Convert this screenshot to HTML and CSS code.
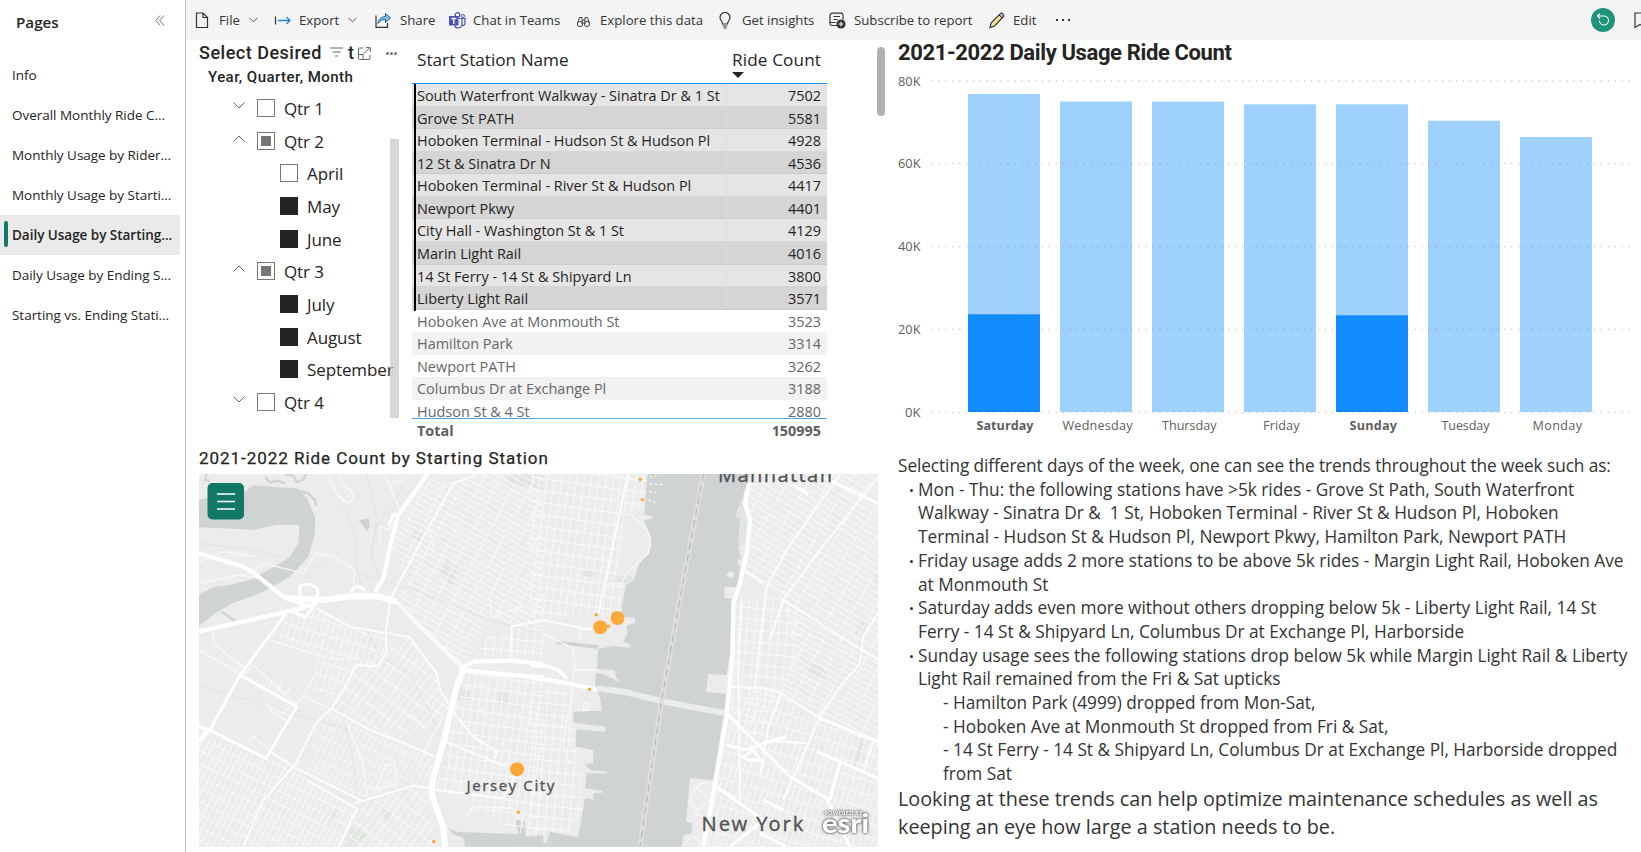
FILE: index.html
```html
<!DOCTYPE html>
<html lang="en">
<head>
<meta charset="utf-8">
<title>Daily Usage by Starting Station</title>
<link rel="stylesheet" href="styles.css">
</head>
<body>
<div class="app">
  <nav class="sidebar">
    <div class="side-head"><span>Pages</span>
      <svg class="collapse" width="10" height="11" viewBox="0 0 10 11"><path d="M5 .5.8 5.500 5 10.500M9 .5 4.800 5.500 9 10.500"/></svg>
    </div>
    <a class="page">Info</a>
    <a class="page">Overall Monthly Ride C...</a>
    <a class="page">Monthly Usage by Rider...</a>
    <a class="page">Monthly Usage by Starti...</a>
    <a class="page active">Daily Usage by Starting...</a>
    <a class="page">Daily Usage by Ending S...</a>
    <a class="page">Starting vs. Ending Stati...</a>
  </nav>
  <div class="main">
    <header class="toolbar">
      <div class="tool"><svg width="14" height="17" viewBox="0 0 14 17"><path class="ink" d="M1.500 1H8l4.500 4.500v10h-11zM8 1v4.500h4.500"/></svg><span>File</span><svg class="chev" width="9" height="6" viewBox="0 0 9 6"><path d="M.5.800l4 4 4-4"/></svg></div>
      <div class="tool"><svg width="18" height="17" viewBox="0 0 18 17"><path class="ink" d="M1.500 4.500v8"/><path class="blue" d="M4 8.500h12M12.500 5l3.500 3.500-3.500 3.500"/></svg><span>Export</span><svg class="chev" width="9" height="6" viewBox="0 0 9 6"><path d="M.5.800l4 4 4-4"/></svg></div>
      <div class="tool"><svg width="17" height="17" viewBox="0 0 17 17"><path class="ink" d="M1 3.500v11.800h11.500V11"/><path class="arrow" d="M3 11.500C3.500 7 6 5 10.500 4.500V1.500L15.500 6l-5 4.500v-3C7 7.500 5 8.500 3 11.500z"/></svg><span>Share</span></div>
      <div class="tool"><svg width="18" height="17" viewBox="0 0 18 17"><circle cx="9.500" cy="3" r="2.300" fill="#fff" stroke="#4b53bc" stroke-width="1.300"/><circle cx="15" cy="4" r="1.500" fill="#fff" stroke="#4b53bc"/><path d="M11 6.500h3v6c0 2-1.500 3.200-3.500 3.500-2 0-3.500-1-4-2.500M14 6.500h3v4.500c0 1.500-1 2.500-2.500 2.500" fill="none" stroke="#4b53bc" stroke-width="1.200"/><rect x="1" y="4" width="9.500" height="9.500" fill="#4b53bc"/><path d="M3.300 6.500h5M5.800 6.500V12" stroke="#fff" stroke-width="1.400"/></svg><span>Chat in Teams</span></div>
      <div class="tool"><svg width="15" height="17" viewBox="0 0 15 17"><g class="thin"><circle cx="4" cy="12" r="2.600"/><circle cx="11" cy="12" r="2.600"/><path d="M1.500 11 3.500 5.500h2.500V12M13.500 11l-2-5.500H9V12M6 8h3M6.500 11h2"/></g></svg><span>Explore this data</span></div>
      <div class="tool"><svg width="16" height="17" viewBox="0 0 16 17"><path class="ink" d="M5.500 12C5.500 9 3 8.500 3 5.500a5 5 0 0 1 10 0C13 8.500 10.500 9 10.500 12zM5.700 14h4.600M6.500 16h3"/></svg><span>Get insights</span></div>
      <div class="tool"><svg width="18" height="17" viewBox="0 0 18 17"><path class="ink" d="M8 13.500H3a2 2 0 0 1-2-2V3.500a2.300 2.300 0 0 1 2.300-2.300H12A2 2 0 0 1 14 3.500v4M4.500 4.500h6.500M4.500 7.500h4M1.500 10.500h5"/><circle cx="12" cy="12" r="4.600" fill="#333"/><path d="M9.500 12h5M12 9.500v5" stroke="#fff"/></svg><span>Subscribe to report</span></div>
      <div class="tool"><svg width="18" height="17" viewBox="0 0 18 17"><path d="M2 15.500 3 11 12.500 1.500l3 3L6.500 14z" fill="#ffe29a" stroke="#333" stroke-width="1.200"/><path d="M11 3 13 1c1-.7 3.500 1.500 2.700 3L14 6z" fill="#b79ad0" stroke="#333"/></svg><span>Edit</span></div>
      <div class="more"><i></i><i></i><i></i></div>
      <div class="right-tools">
        <svg width="24" height="24" viewBox="0 0 24 24"><circle cx="12" cy="12" r="12" fill="#20937c"/><path d="M6.500 8h7a4.500 4.500 0 1 1-5 4.500M9 5.500 6.500 8 9 10.500" fill="none" stroke="#fff" stroke-width="1.100"/></svg>
        <svg class="bookmark" width="12" height="17" viewBox="0 0 12 17"><path class="ink" d="M1 1h10v14.500L6 12.500 1 15.500z"/></svg>
      </div>
    </header>

    <div class="report">
      <div class="left">
        <div class="top">
          <section class="slicer">
            <div class="slicer-title"><span class="st-text">Select Desired</span>
              <svg width="13" height="10" viewBox="0 0 13 10"><path d="M0 1h13M2.500 5h8M5 9h3"/></svg><span class="st-t">t</span>
              <svg class="focus" width="13" height="13" viewBox="0 0 13 13"><path d="M5 1H1.500a1 1 0 0 0-1 1v9.500a1 1 0 0 0 1 1H11a1 1 0 0 0 1-1V8M.500 7.500H5v5M5.500 7 12 .800M8 .6h4.300V5"/></svg>
              <span class="dots"><i></i><i></i><i></i></span>
            </div>
            <div class="slicer-sub">Year, Quarter, Month</div>
            <div class="tree-wrap">
              <div class="tree">
                <div class="node"><svg class="tw" viewBox="0 0 12 7"><path d="M.5.500l5.500 5.500L11.500.500"/></svg><b class="box"></b>Qtr 1</div>
                <div class="node"><svg class="tw" viewBox="0 0 12 7"><path d="M.5 6.500 6 1l5.500 5.500"/></svg><b class="box part"></b>Qtr 2</div>
                <div class="node month"><b class="box"></b>April</div>
                <div class="node month"><b class="box full"></b>May</div>
                <div class="node month"><b class="box full"></b>June</div>
                <div class="node"><svg class="tw" viewBox="0 0 12 7"><path d="M.5 6.500 6 1l5.500 5.500"/></svg><b class="box part"></b>Qtr 3</div>
                <div class="node month"><b class="box full"></b>July</div>
                <div class="node month"><b class="box full"></b>August</div>
                <div class="node month"><b class="box full"></b>September</div>
                <div class="node"><svg class="tw" viewBox="0 0 12 7"><path d="M.5.500l5.500 5.500L11.500.500"/></svg><b class="box"></b>Qtr 4</div>
              </div>
              <div class="tree-scroll"></div>
            </div>
          </section>

          <section class="table">
            <div class="thead"><span>Start Station Name</span><span class="rc">Ride Count<i class="sort"></i></span></div>
            <div class="tbody">
              <div class="row sel"><span>South Waterfront Walkway - Sinatra Dr &amp; 1 St</span><span>7502</span></div>
              <div class="row sel alt"><span>Grove St PATH</span><span>5581</span></div>
              <div class="row sel"><span>Hoboken Terminal - Hudson St &amp; Hudson Pl</span><span>4928</span></div>
              <div class="row sel alt"><span>12 St &amp; Sinatra Dr N</span><span>4536</span></div>
              <div class="row sel"><span>Hoboken Terminal - River St &amp; Hudson Pl</span><span>4417</span></div>
              <div class="row sel alt"><span>Newport Pkwy</span><span>4401</span></div>
              <div class="row sel"><span>City Hall - Washington St &amp; 1 St</span><span>4129</span></div>
              <div class="row sel alt"><span>Marin Light Rail</span><span>4016</span></div>
              <div class="row sel"><span>14 St Ferry - 14 St &amp; Shipyard Ln</span><span>3800</span></div>
              <div class="row sel alt"><span>Liberty Light Rail</span><span>3571</span></div>
              <div class="row"><span>Hoboken Ave at Monmouth St</span><span>3523</span></div>
              <div class="row alt"><span>Hamilton Park</span><span>3314</span></div>
              <div class="row"><span>Newport PATH</span><span>3262</span></div>
              <div class="row alt"><span>Columbus Dr at Exchange Pl</span><span>3188</span></div>
              <div class="row"><span>Hudson St &amp; 4 St</span><span>2880</span></div>
            </div>
            <div class="total"><span>Total</span><span>150995</span></div>
          </section>
          <div class="vscroll"></div>
        </div>

        <h2 class="map-title">2021-2022 Ride Count by Starting Station</h2>
        <svg class="map" width="679" height="373" viewBox="199 474 679 373">
          <defs>
            <pattern id="g1" width="17" height="34" patternUnits="userSpaceOnUse" patternTransform="rotate(27)"><path d="M0 1H17M1 0V34" class="st"/></pattern>
            <pattern id="g2" width="46" height="17" patternUnits="userSpaceOnUse" patternTransform="rotate(28)"><path d="M0 1H46M1 0V17" class="st"/></pattern>
            <pattern id="g3" width="22" height="36" patternUnits="userSpaceOnUse" patternTransform="rotate(8)"><path d="M0 1H22M1 0V36" class="st"/></pattern>
            <pattern id="g4" width="52" height="18" patternUnits="userSpaceOnUse" patternTransform="rotate(31)"><path d="M0 1H52M1 0V18" class="st"/></pattern>
            <pattern id="g5" width="20" height="44" patternUnits="userSpaceOnUse" patternTransform="rotate(37)"><path d="M0 1H20M1 0V44" class="st"/></pattern>
            <pattern id="g6" width="24" height="34" patternUnits="userSpaceOnUse" patternTransform="rotate(5)"><path d="M0 1H24M1 0V34" class="st"/></pattern>
            <pattern id="g7" width="18" height="40" patternUnits="userSpaceOnUse" patternTransform="rotate(17)"><path d="M0 1H18M1 0V40" class="st"/></pattern>
          </defs>
          <rect x="199" y="474" width="679" height="373" fill="#ececec"/>
          <!-- western half -->
          <g transform="translate(190 440) scale(.33333)">
            <path class="water" d="M27 180 110 160 165 155 190 135 240 140 320 145 350 172 375 230 375 280 355 350 300 410 240 445 190 468 130 488 75 520 27 558V462L75 440 120 435 180 420 250 382 300 350 325 310 328 255 260 254 190 270 100 265 27 262z"/>
            <path class="creek" d="M50 102 45 120 60 122M225 112l15 15 25-5 20 8M285 102l25 5 10 20 20-8 8-17M320 150l35 10 20 20 4 18M95 515l40 28"/>
            <path class="water" d="M507 240 537 236 540 262 530 272zM775 1165 800 1175 830 1177 985 1182 978 1145 990 1136 1006 1150 1006 1190 1060 1185V1220H826L820 1195 790 1182z"/>
            <path class="park" d="M950 110 985 102H1060V155L1010 140 960 130zM670 272 707 285 694 307 662 292zM765 362 806 380 786 434 752 405zM805 746 840 750 835 780 800 778zM928 758l32 3-2 35-33-3zM400 1127l50-20-15 36zM485 1160l35 8 10 20-40 32h-30zM586 1103l25 20-18 22-20-24zM785 820l18 15-15 15z"/>
            <path fill="url(#g2)" d="M715 115 790 130 745 235 690 350 640 390 600 330 630 215z"/>
            <path fill="url(#g2)" d="M800 125 870 102H1060V560H980L905 530 850 640 805 672 640 490 630 450 700 300z"/>
            <path fill="url(#g7)" d="M290 530 380 508 510 568 590 578 588 650 560 680 500 675 440 790 370 740 380 640 270 600z"/>
            <path fill="url(#g5)" d="M500 685 660 590 740 720 780 800 735 850 620 900 430 800z"/>
            <path fill="url(#g1)" d="M62 880 228 955 320 975 200 1110 165 1220H27V910z"/>
            <path fill="url(#g1)" d="M325 980 350 1020 510 1110 450 1220H170L210 1100z"/>
            <path fill="url(#g1)" d="M380 845 425 810 730 950 720 1040 660 1030 500 1080 350 1000z" opacity=".75"/>
            <path fill="url(#g5)" d="M520 1090 680 1040 720 1060 740 1220H460z"/>
            <path fill="url(#g3)" d="M835 700 1060 715V1180H985L850 1100 740 1045 790 820z"/>
            <path fill="url(#g6)" d="M890 590 965 570 1060 545V660H850z"/>
            <path class="rail" d="M530 102 560 230 545 350 580 440M460 200 495 280 500 390 520 450M640 140 560 260 540 360M27 310 160 325 300 355 400 385M500 400 690 455 900 540 1050 580M530 570 570 650 660 700 750 880M27 735 240 800 480 870M715 102 650 165 590 230M465 850 490 960 500 1080"/>
            <path class="minor" d="M27 365 100 335 200 350M180 400 220 370 340 400 375 340 430 350 495 390 490 430M27 430 150 405 230 420M70 575v35l100 80M27 630 150 700M240 600 380 645 460 660M570 310v-50l30 10 30-55M585 102l45 110M720 270 735 350M900 480 905 530 1000 500M415 102 440 160 470 190 492 180 485 155 455 130 450 102M610 120l12 12 20-20"/>
            <path class="minor" d="M160 706l30-30 130 120M235 805 300 850M220 790l60 30 60-50 90 40M300 740l-15 30M250 715l-15 30M275 728l-15 30M170 910l20-20 60 50M380 700l-50 80M470 850l50 120 10 100M580 980l35-10 5 60-60 20zM700 780l60 50-60 110M660 820l50 50M830 1130l20-30 120 5 30 50"/>
            <path class="mid" d="M378 505 480 560 660 592 740 700 750 750 800 830 850 890 920 935 915 955M600 485 588 575 590 635 563 680 500 675 465 740 425 805 380 845 315 975 220 1080 185 1160 160 1220M425 805 540 870 620 900 735 950M350 1020 500 1105 445 1220M240 935 320 985 520 1085M495 1090 670 1037 725 1045M725 1048 940 1075 985 985M765 905 950 980M600 480 690 310 790 130 860 105M965 660V560L1060 540"/>
            <path class="road" d="M288 520 150 705 60 870 27 905M150 705 320 800 228 955 62 872 27 862"/>
            <path class="hwy" d="M27 575 160 545 320 508 380 490M27 340 160 380 190 398 280 470 360 500M712 102 625 225 600 320 580 415 555 455"/>
            <path class="hwy2" d="M290 475 400 480 470 470 560 468 620 485"/>
            <path class="hwy" d="M620 485 690 560 815 680" opacity=".7"/>
            <path class="hwy2" d="M765 1220 760 1160 725 1065 728 1020 765 890 800 740 820 690"/>
            <path class="hwy" d="M810 688 850 665 960 662 1060 672M820 690 960 705 1060 712"/>
            <path class="road" d="M330 470V440a28 22 0 1 1 45 35M485 460a18 15 0 1 1 38-8M300 510 345 532 370 500M595 255 610 225 628 225"/>
            <path class="road" d="M27 862 70 872M35 895 45 870"/>
          </g>
          <!-- eastern half -->
          <g transform="translate(530 440) scale(.33333)">
            <path fill="url(#g3)" d="M0 102H352L345 210 300 215 280 300 260 420 288 435 270 525 205 535 120 525 20 545 0 545z"/>
            <path fill="url(#g6)" d="M0 690 90 720 125 740 125 850 150 960 160 1120 110 1190 0 1190z"/>
            <path class="water" d="M352 102 348 150 343 225 368 228 366 235 343 242 362 290 364 320 350 345 325 375 312 420 288 435 275 500 278 530 315 533 315 550 290 556 292 580 280 605 302 615 300 623 250 618 205 627 80 612V602L205 616 201 688 255 690 257 712 273 728 215 700 197 700 195 735 210 770 215 812 130 815 130 848 227 860 225 875 140 868 136 920 190 930V970L165 972 180 990 232 995 230 1001 170 1000 165 1045 218 1053 216 1058 190 1060 190 1080 165 1075 155 1130 145 1192 60 1175 50 1210 -60 1185V1220H455L460 1185 485 1180 487 1150 468 1145 480 1015 550 1020 580 830 588 762 528 755 535 702 590 705 600 640 605 475H583V441H620L635 360 625 325 630 235 615 230 635 200 640 165 660 102z"/>
            <path class="park" d="M640 165 660 235 650 300 627 325 630 235 615 230zM828 690 845 668 893 697 880 722zM975 580l20-35 18 5-10 30-20 10zM1044 370V430L1028 415zM255 408h55l-5 18-50 8zM160 390l30 2v18l-33-3zM970 975 990 900 1000 915 985 980z"/>
            <path fill="#ececec" d="M600 392l14 8-8 16-18-8zM625 358h12v20h-14z"/>
            <path fill="url(#g4)" d="M670 102H1044V640L760 480 700 440 640 400 655 340 662 230 650 170z"/>
            <path fill="url(#g6)" d="M612 470 760 475 830 540 760 760 690 900 590 820 605 640z"/>
            <path fill="url(#g2)" d="M760 480 1044 640V900L870 830 755 760 790 640z"/>
            <path fill="url(#g7)" d="M600 830 680 740 755 760 870 830 1044 905V1220H530L560 1040z"/>
            <path fill="none" class="minor" d="M490 1060a40 40 0 0 1 50-30M500 1110 480 1080 500 1040 540 1080 490 1120 540 1140M470 1200l20-10 30 30"/>
            <path class="minor" d="M40 580 130 625 135 690 200 690M130 690 125 780 105 860 100 920 120 970M150 600v-30l50-10M0 850 110 860M300 220 350 270 362 300 355 340 290 400 275 430 240 430M160 790h15v20h-15z"/>
            <path class="minor" d="M360 112l20-5M360 132l40 2M358 155l20 3M355 180l25 8" stroke-dasharray="8 6"/>
            <path class="mid" d="M294 102 240 360 205 520M0 548 40 540 185 570M930 102 770 330 710 440 690 600 675 740M1044 110 870 330 760 480 720 600M760 480 900 570 1044 660M645 395 700 430M700 900 830 910M1044 520 1000 590 990 670 930 740 870 830 840 900 760 1080M605 740 700 745 755 760 870 835M755 760 715 860 690 1010M635 480 625 700 630 1080M930 970 900 1060M1030 905 1000 1000"/>
            <path class="road" d="M860 102 1044 190M790 135 835 160M870 835 1044 905M860 935 1044 1015M590 915 650 930 700 910 770 890M560 1040 700 1140 600 1220M700 1080 760 1110M930 970 900 1080"/>
            <path class="tunnel" d="M200 745 280 755 400 785 590 820"/>
            <path d="M0 712 100 728 200 748" class="hwy"/><path class="hwy" d="M0 675 50 678 85 690 110 715" opacity=".9"/>
            <path class="road" d="M590 820 700 930 780 1010 890 1075 960 1220M690 1180 770 1220M640 950l30-20 20 30-35 0z"/>
            <path class="hwy" d="M658 130 645 190 660 240 650 340 630 430 610 490 608 640 590 830 550 1060 520 1220"/>
            <path d="M520 102 455 450 395 780 330 1220" stroke="#dddddb" stroke-width="16" fill="none"/>
            <path d="M520 102 455 450 395 780 330 1220" stroke="#b5b1ae" stroke-width="3" stroke-dasharray="22 13" fill="none"/>
          </g>
          <g class="labels">
            <text x="718" y="482" font-size="20" textLength="114">Manhattan</text>
            <text x="466.500" y="791" font-size="15" textLength="88">Jersey City</text>
            <text x="701.500" y="830.500" font-size="20" textLength="102">New York</text>
          </g>
          <g fill="#fea83a">
            <circle cx="617.500" cy="618" r="7"/><circle cx="600.300" cy="627.300" r="7"/><circle cx="517" cy="769.300" r="7"/>
            <circle cx="640.300" cy="479.500" r="1.800"/><circle cx="642.300" cy="499.800" r="1.800"/><circle cx="596.200" cy="614.800" r="1.800"/><circle cx="608.500" cy="626.200" r="1.800"/><circle cx="589.500" cy="689.300" r="1.800"/><circle cx="518.200" cy="812.200" r="1.800"/><circle cx="433.700" cy="841.500" r="1.800"/>
          </g>
          <g class="esri"><text x="824.500" y="815" font-size="5.500" font-weight="700" textLength="38">POWERED BY</text><text x="822" y="833" font-size="26" font-weight="900" textLength="47" lengthAdjust="spacingAndGlyphs">esri</text></g>
          <rect x="207.500" y="483" width="36.500" height="36.500" rx="5" fill="#117865"/>
          <path d="M217 494h18M217 501.500h18M217 509h18" stroke="#fff" stroke-width="1.300"/>
        </svg>
      </div>

      <div class="rightcol">
        <h1 class="chart-title">2021-2022 Daily Usage Ride Count</h1>
        <svg class="chart" width="743" height="370" viewBox="898 70 743 370">
          <g class="grid"><path d="M931.500 81H1631M931.500 163.500H1631M931.500 246.500H1631M931.500 329.500H1631M931.500 412.500H1631"/></g>
          <g class="bars">
            <rect x="968" y="94" width="72" height="318"/><rect x="1060" y="101.500" width="72" height="310.500"/><rect x="1152" y="101.700" width="72" height="310.300"/><rect x="1244" y="104.300" width="72" height="307.700"/><rect x="1336" y="104.300" width="72" height="307.700"/><rect x="1428" y="120.700" width="72" height="291.300"/><rect x="1520" y="137" width="72" height="275"/>
          </g>
          <g fill="#118dff"><rect x="968" y="314.300" width="72" height="97.700"/><rect x="1336" y="315.300" width="72" height="96.700"/></g>
          <g class="axis">
            <text x="898" y="85.500" textLength="22.500" lengthAdjust="spacingAndGlyphs">80K</text><text x="898" y="168" textLength="22.500" lengthAdjust="spacingAndGlyphs">60K</text><text x="898" y="251" textLength="22.500" lengthAdjust="spacingAndGlyphs">40K</text><text x="898" y="334" textLength="22.500" lengthAdjust="spacingAndGlyphs">20K</text><text x="905" y="416.500" textLength="15.500" lengthAdjust="spacingAndGlyphs">0K</text>
            <text class="bold" x="976.500" y="430" textLength="57">Saturday</text><text x="1062.500" y="430" textLength="70">Wednesday</text><text x="1162" y="430" textLength="54.500">Thursday</text><text x="1263" y="430" textLength="36.500">Friday</text><text class="bold" x="1349.500" y="430" textLength="47.500">Sunday</text><text x="1441.500" y="430" textLength="48">Tuesday</text><text x="1532.500" y="430" textLength="49.500">Monday</text>
          </g>
        </svg>
        <article class="notes">
          <p class="lead">Selecting different days of the week, one can see the trends throughout the week such as:</p>
          <ul>
            <li>Mon - Thu: the following stations have &gt;5k rides - Grove St Path, South Waterfront<br>Walkway - Sinatra Dr &amp; &nbsp;1 St, Hoboken Terminal - River St &amp; Hudson Pl, Hoboken<br>Terminal - Hudson St &amp; Hudson Pl, Newport Pkwy, Hamilton Park, Newport PATH</li>
            <li>Friday usage adds 2 more stations to be above 5k rides - Margin Light Rail, Hoboken Ave<br>at Monmouth St</li>
            <li>Saturday adds even more without others dropping below 5k - Liberty Light Rail, 14 St<br>Ferry - 14 St &amp; Shipyard Ln, Columbus Dr at Exchange Pl, Harborside</li>
            <li>Sunday usage sees the following stations drop below 5k while Margin Light Rail &amp; Liberty<br>Light Rail remained from the Fri &amp; Sat upticks</li>
          </ul>
          <p class="sub">- Hamilton Park (4999) dropped from Mon-Sat,<br>- Hoboken Ave at Monmouth St dropped from Fri &amp; Sat,<br>- 14 St Ferry - 14 St &amp; Shipyard Ln, Columbus Dr at Exchange Pl, Harborside dropped<br>from Sat</p>
          <p class="closing">Looking at these trends can help optimize maintenance schedules as well as<br>keeping an eye how large a station needs to be.</p>
        </article>
      </div>
    </div>
  </div>
</div>
</body>
</html>
```
FILE: styles.css
```css
* { box-sizing: border-box; }
body { margin: 0; font-family: "Open Sans", "Noto Sans", sans-serif; color: #252423; background: #fff; overflow: hidden; }
.app { display: flex; width: 1641px; height: 852px; overflow: hidden; white-space: nowrap; }
svg { display: block; flex: none; }

.sidebar { width: 186px; border-right: 1px solid #c4c4c4; flex: none; }
.side-head { height: 54px; padding: 0 20px 10px 16px; display: flex; align-items: center; justify-content: space-between; font-size: 15.200px; font-weight: 600; }
.collapse { fill: none; stroke: #777; margin-bottom: 4px; }
.page { display: flex; align-items: center; width: 180px; height: 40px; padding: 0 0 1px 12px; font-size: 13.500px; letter-spacing: -.03px; position: relative; }
.page.active { background: #eaeaea; font-weight: 600; }
.page.active::before { content: ""; position: absolute; left: 4px; top: 6px; width: 4px; height: 26px; border-radius: 2px; background: #117865; }
.side-head + .page { margin-top: 1px; }

.main { flex: 1; min-width: 0; }
.toolbar { height: 40px; background: #f4f4f4; display: grid; grid-template-columns: 79px 101px 73px 128px 141px 112px 159px 68px 1fr auto; padding-left: 9px; align-items: center; font-size: 13.200px; color: #333; }
.tool { display: grid; grid-template-columns: 24px auto 1fr; align-items: center; }
.tool:nth-child(n+2) { grid-template-columns: 25px auto 1fr; }
.tool:nth-child(5) { grid-template-columns: 24px auto 1fr; }
.tool:nth-child(1) .chev { margin-left: 9px; }
.ink { fill: none; stroke: #333; stroke-width: 1.200; }
.blue { fill: none; stroke: #1a86d0; stroke-width: 1.300; }
.arrow { fill: #83beec; stroke: #1f5f97; }
.thin { fill: none; stroke: #444; stroke-width: 1; }
.chev { margin-left: 9px; fill: none; stroke: #555; }
.more { display: flex; gap: 4px; }
.more i { width: 2px; height: 2px; background: #333; }
.right-tools { display: flex; align-items: center; gap: 19px; width: 50px; overflow: hidden; }

.report { display: flex; height: 812px; }
.left { width: 712px; padding-left: 13px; flex: none; }
.top { display: flex; height: 408px; }

.slicer { width: 213px; flex: none; }
.slicer-title { display: flex; align-items: center; height: 28px; padding-bottom: 4px; font-family: Roboto, sans-serif; font-size: 18px; font-weight: 500; }
.slicer-title svg { fill: none; stroke: #666; }
.st-text { width: 131px; letter-spacing: .5px; }
.slicer-title .st-t { margin: 0 4px 0 5px; }
.slicer-title .focus { margin-top: 3px; }
.dots { display: flex; gap: 1px; margin: 2px 0 0 15px; }
.dots i { width: 3px; height: 3px; border-radius: 50%; background: #777; }
.slicer-sub { padding-left: 9px; height: 25px; line-height: 18px; font-family: Roboto, sans-serif; font-size: 15px; font-weight: 500; letter-spacing: .45px; }
.tree-wrap { display: flex; position: relative; }
.tree { width: 191px; margin-top: -1px; }
.node { display: flex; align-items: center; height: 32.700px; padding-left: 34px; font-size: 17px; letter-spacing: -.1px; }
.tw { width: 12px; height: 7px; margin: -6px 13px 0 0; fill: none; stroke: #666; }
.box { width: 18px; height: 18px; border: 1px solid #777; margin: -1px 9px 0 -1px; flex: none; }
.month { padding-left: 82px; }
.box.full { background: #252423; border-color: #252423; }
.box.part { background: linear-gradient(#777, #777) center/10px 10px no-repeat; }
.tree-scroll { position: absolute; left: 191px; top: 46px; width: 9px; height: 279px; background: rgba(200, 198, 196, .7); }

.table { width: 415px; flex: none; }
.thead { height: 44px; display: flex; justify-content: space-between; padding: 8px 6px 0 5px; font-size: 17.200px; line-height: 24px; border-bottom: 1px solid #118dff; }
.rc { position: relative; letter-spacing: .1px; }
.sort { position: absolute; left: 0; top: 24px; border: 6px solid transparent; border-top-color: #252423; border-bottom: 0; }
.tbody { height: 335px; overflow: hidden; border-bottom: 1px solid #4ba6f5; font-size: 14.450px; }
.row { display: grid; grid-template-columns: 315px 1fr; height: 22.570px; line-height: 23.500px; color: #666; }
.row span { padding-left: 5px; }
.row span:last-child { text-align: right; padding-right: 6px; }
.row.alt { background: #f2f2f2; }
.row.sel { background: #e5e5e5; color: #252423; border-bottom: 1px solid #d6d6d6; }
.row.sel.alt { background: #d5d5d5; border-bottom-color: #cbcbcb; }
.row.sel span:first-child { border-right: 1px solid #ddd; padding-left: 1px; box-shadow: -2px 0 #000; margin-left: 4px; }
.total { display: flex; justify-content: space-between; padding: 0 6px 0 5px; font-size: 14.400px; font-weight: 700; line-height: 24px; color: #605e5c; }
.vscroll { width: 8px; height: 69px; border-radius: 4px; background: #b3b2b1; margin: 7px 0 0 50px; flex: none; }

.map-title { margin: 0; height: 26px; line-height: 21px; font-family: Roboto, sans-serif; font-size: 17px; font-weight: 400; letter-spacing: .960px; -webkit-text-stroke: .25px #252423; }
.st { stroke: #f9f9f9; stroke-width: 3.300; fill: none; }
.water { fill: #cfd3d4; }
.park { fill: #e1e6e1; }
.creek { fill: none; stroke: #cfd3d4; stroke-width: 7; }
.rail { fill: none; stroke: #e0e0df; stroke-width: 2.500; }
.minor { fill: none; stroke: #f8f8f8; stroke-width: 4; }
.mid { fill: none; stroke: #fcfcfc; stroke-width: 6; }
.road { fill: none; stroke: #fff; stroke-width: 9; }
.hwy { fill: none; stroke: #fff; stroke-width: 13; stroke-linejoin: round; }
.hwy2 { fill: none; stroke: #fff; stroke-width: 18; stroke-linejoin: round; }
.tunnel { fill: none; stroke: #ebedec; stroke-width: 18; }
.labels { fill: #555; stroke: #555; stroke-width: .3; font-family: "Noto Sans", sans-serif; }
.esri { fill: #fff; font-family: Lato, sans-serif; filter: drop-shadow(0 0 1px #555) drop-shadow(0 0 1px #888); }

.rightcol { flex: 1; min-width: 0; }
.chart-title { margin: 0; height: 30px; line-height: 26px; font-family: Roboto, sans-serif; font-size: 22px; font-weight: 700; letter-spacing: -.370px; }
.grid path { stroke: #d0d0d0; stroke-width: 1.300; stroke-dasharray: 1.300 5.600; }
.bars { fill: #118dff; opacity: .4; }
.axis { font-size: 12.600px; fill: #605e5c; }
.axis .bold { font-weight: 700; }
.notes { padding-top: 14px; font-size: 17.250px; line-height: 23.700px; color: #333; }
.notes p { margin: 0; }
.notes .lead { letter-spacing: -.080px; }
.notes ul { margin: 0; padding: 0 0 0 20px; list-style: none; }
.notes li { position: relative; }
.notes li::before { content: ""; position: absolute; left: -8px; top: 11px; width: 3px; height: 3px; border-radius: 50%; background: #333; }
.notes .sub { padding-left: 45px; }
.notes .closing { font-size: 19.800px; line-height: 28px; margin-top: -1px; }
```
